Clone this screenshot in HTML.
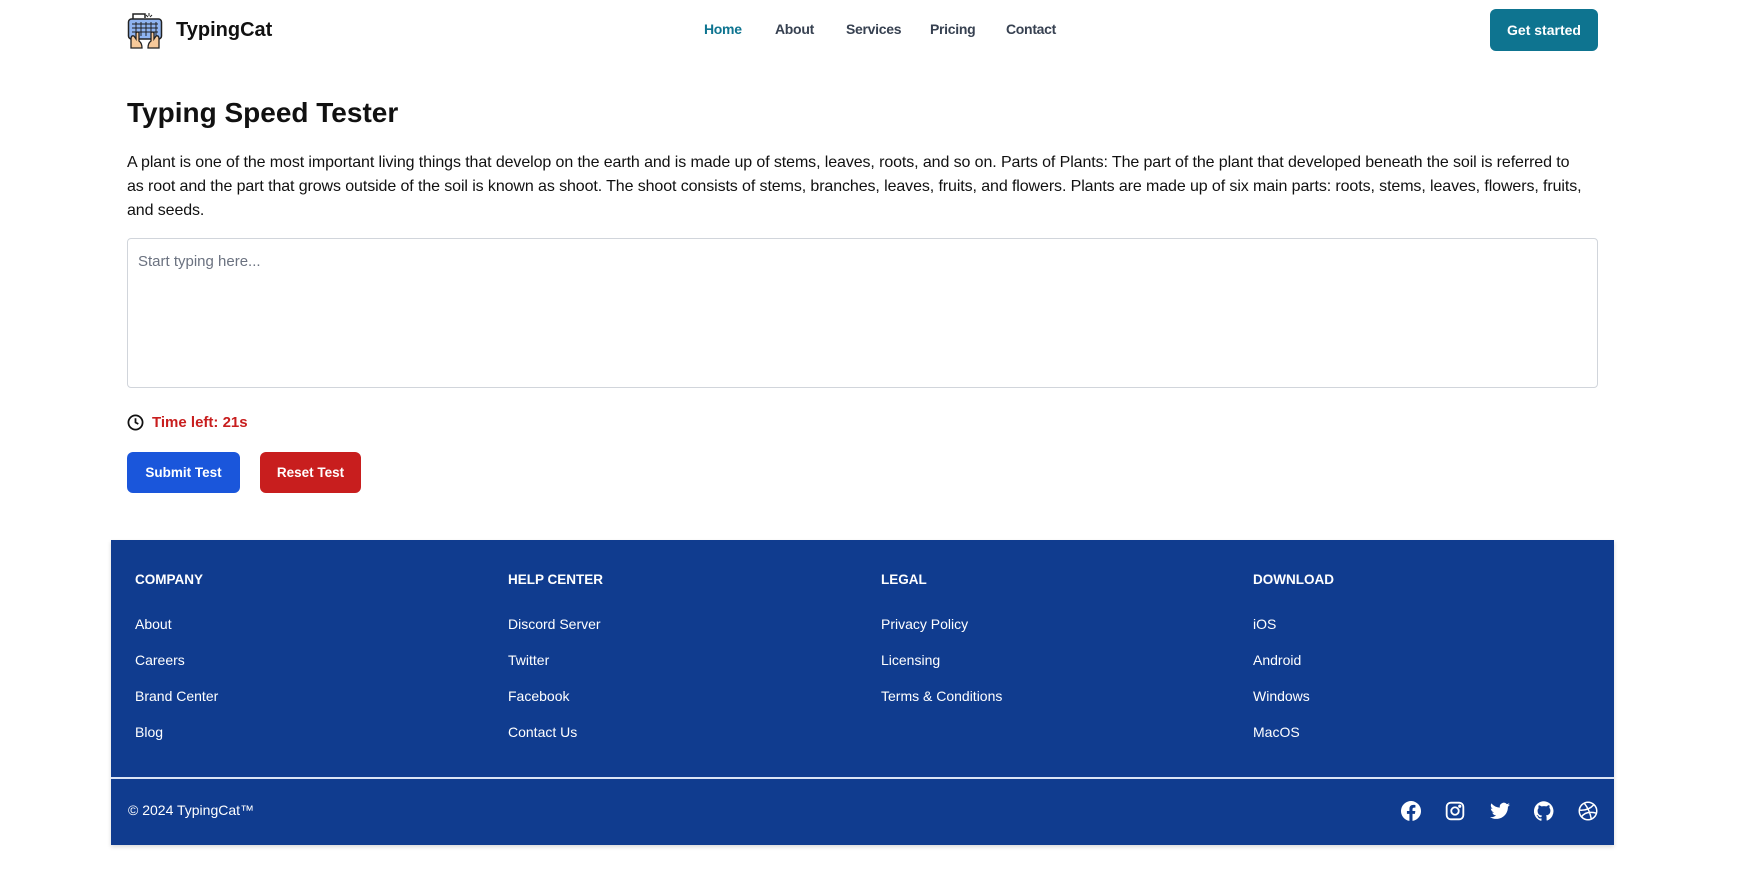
<!DOCTYPE html>
<html><head><meta charset="utf-8"><style>
*{box-sizing:border-box;margin:0;padding:0}
body{width:1756px;height:876px;background:#fff;font-family:"Liberation Sans",sans-serif;color:#111;position:relative;overflow:hidden}
.abs{position:absolute}
.nav a{position:absolute;top:21px;font-size:14px;color:#374151;text-decoration:none;font-weight:bold;letter-spacing:-0.3px}
.btn{position:absolute;color:#fff;font-weight:bold;font-size:13.5px;border-radius:6px;display:flex;align-items:center;justify-content:center}
.footer{position:absolute;left:111px;top:540px;width:1503px;height:305px;background:#103c8f;color:#fff;box-shadow:0 2px 4px rgba(0,0,0,.15)}
.col{position:absolute;top:32px;font-size:14px}
.col h4{font-size:13.5px;font-weight:bold;height:44px}
.col div{height:36px}
</style></head><body>
<svg class="abs" style="left:127px;top:11px" width="36" height="38" viewBox="0 0 36 38">
<path d="M6 8 V3 H18 V7" stroke="#222" stroke-width="1.5" fill="none"/>
<path d="M22 2v3M25 4l-2 2M19 4l2 2" stroke="#222" stroke-width="1"/>
<rect x="1.5" y="8" width="33" height="20" rx="3" fill="#8fb4f0" stroke="#222" stroke-width="1.5"/>
<g stroke="#222" stroke-width="1"><path d="M5 13h26M5 17h26M5 21h26M9 11v14M14 11v14M19 11v14M24 11v14M29 11v14"/></g>
<path d="M4 37 V28 q0-4 3-3 l2 3 V22 q2-2 3 0 v8 q3 2 3 7Z" fill="#f6c99a" stroke="#222" stroke-width="1.3"/>
<path d="M32 37 V28 q0-4-3-3 l-2 3 V22 q-2-2-3 0 v8 q-3 2-3 7Z" fill="#f6c99a" stroke="#222" stroke-width="1.3"/>
</svg>
<div class="abs" style="left:176px;top:19px;font-size:20px;font-weight:bold;color:#111">TypingCat</div>
<div class="nav">
<a style="left:704px;color:#0e7490">Home</a>
<a style="left:775px">About</a>
<a style="left:846px">Services</a>
<a style="left:930px">Pricing</a>
<a style="left:1006px">Contact</a>
</div>
<div class="btn" style="left:1490px;top:9px;width:108px;height:42px;background:#0e7490;font-size:14px">Get started</div>

<div class="abs" style="left:127px;top:97px;font-size:28px;font-weight:bold">Typing Speed Tester</div>
<div class="abs" style="left:127px;top:151px;width:1458px;font-size:16px;line-height:24px;color:#111;letter-spacing:-0.1px">A plant is one of the most important living things that develop on the earth and is made up of stems, leaves, roots, and so on. Parts of Plants: The part of the plant that developed beneath the soil is referred to as root and the part that grows outside of the soil is known as shoot. The shoot consists of stems, branches, leaves, fruits, and flowers. Plants are made up of six main parts: roots, stems, leaves, flowers, fruits, and seeds.</div>
<div class="abs" style="left:127px;top:238px;width:1471px;height:150px;border:1.5px solid #d1d5db;border-radius:4px"></div>
<div class="abs" style="left:138px;top:253px;font-size:15px;color:#6b7280">Start typing here...</div>
<svg class="abs" style="left:127px;top:414px" width="17" height="17" viewBox="0 0 24 24" fill="none" stroke="#111" stroke-width="2.5"><circle cx="12" cy="12" r="10"/><path d="M12 6v6l4 2"/></svg>
<div class="abs" style="left:152px;top:414px;font-size:15px;font-weight:bold;color:#c81e1e">Time left: 21s</div>
<div class="btn" style="left:127px;top:452px;width:113px;height:41px;background:#1a56db">Submit Test</div>
<div class="btn" style="left:260px;top:452px;width:101px;height:41px;background:#c81e1e">Reset Test</div>

<div class="footer">
<div class="col" style="left:24px"><h4>COMPANY</h4><div>About</div><div>Careers</div><div>Brand Center</div><div>Blog</div></div>
<div class="col" style="left:397px"><h4>HELP CENTER</h4><div>Discord Server</div><div>Twitter</div><div>Facebook</div><div>Contact Us</div></div>
<div class="col" style="left:770px"><h4>LEGAL</h4><div>Privacy Policy</div><div>Licensing</div><div>Terms &amp; Conditions</div></div>
<div class="col" style="left:1142px"><h4>DOWNLOAD</h4><div>iOS</div><div>Android</div><div>Windows</div><div>MacOS</div></div>
<div class="abs" style="left:0;top:237px;width:1503px;height:1.5px;background:#dbe4f5"></div>
<div class="abs" style="left:17px;top:262px;font-size:14px">© 2024 TypingCat™</div>
<svg class="abs" style="left:1290px;top:261px" width="20" height="20" viewBox="0 0 24 24" fill="#fff"><path d="M24 12a12 12 0 1 0-13.9 11.9v-8.4H7.1V12h3V9.4c0-3 1.8-4.7 4.5-4.7 1.3 0 2.7.2 2.7.2v3h-1.5c-1.5 0-2 .9-2 1.9V12h3.4l-.5 3.5h-2.9v8.4A12 12 0 0 0 24 12z"/></svg>
<svg class="abs" style="left:1334px;top:261px" width="20" height="20" viewBox="0 0 24 24" fill="none" stroke="#fff" stroke-width="2.2"><rect x="2" y="2" width="20" height="20" rx="5"/><circle cx="12" cy="12" r="4.5"/><circle cx="17.7" cy="6.3" r=".8" fill="#fff"/></svg>
<svg class="abs" style="left:1379px;top:262px" width="20" height="18" viewBox="0 0 24 20" fill="#fff"><path d="M24 2.4a10 10 0 0 1-2.8.8A4.9 4.9 0 0 0 23.3.5a9.9 9.9 0 0 1-3.1 1.2A4.9 4.9 0 0 0 11.8 6 14 14 0 0 1 1.7.9a4.9 4.9 0 0 0 1.5 6.6A4.9 4.9 0 0 1 1 6.9a4.9 4.9 0 0 0 3.9 4.8 4.9 4.9 0 0 1-2.2.1 4.9 4.9 0 0 0 4.6 3.4A9.9 9.9 0 0 1 0 17.3 14 14 0 0 0 7.5 19.5c9.1 0 14-7.5 14-14v-.6A10 10 0 0 0 24 2.4z"/></svg>
<svg class="abs" style="left:1423px;top:261px" width="20" height="20" viewBox="0 0 24 24" fill="#fff"><path d="M12 .3a12 12 0 0 0-3.8 23.4c.6.1.8-.3.8-.6v-2.2c-3.3.7-4-1.4-4-1.4-.6-1.4-1.4-1.8-1.4-1.8-1-.7.1-.7.1-.7 1.2.1 1.8 1.2 1.8 1.2 1 1.8 2.8 1.3 3.5 1 .1-.8.4-1.3.8-1.6-2.7-.3-5.5-1.3-5.5-6 0-1.2.5-2.3 1.3-3.1-.2-.4-.6-1.6.1-3.2 0 0 1-.3 3.3 1.2a11.5 11.5 0 0 1 6 0C17.3 4.7 18.3 5 18.3 5c.7 1.6.2 2.9.1 3.2.8.8 1.3 1.9 1.3 3.2 0 4.6-2.8 5.6-5.5 5.9.5.4.9 1.1.9 2.2v3.3c0 .3.2.7.8.6A12 12 0 0 0 12 .3"/></svg>
<svg class="abs" style="left:1467px;top:261px" width="20" height="20" viewBox="0 0 24 24" fill="none" stroke="#fff" stroke-width="1.8"><circle cx="12" cy="12" r="10.5"/><path d="M7.5 2.6c4 5 7 11 8.5 19M2 11c6 .5 12-1 17-6.5M4.3 19c3-4.5 8.5-6.5 17.5-4.5"/></svg>
</div>
</body></html>
